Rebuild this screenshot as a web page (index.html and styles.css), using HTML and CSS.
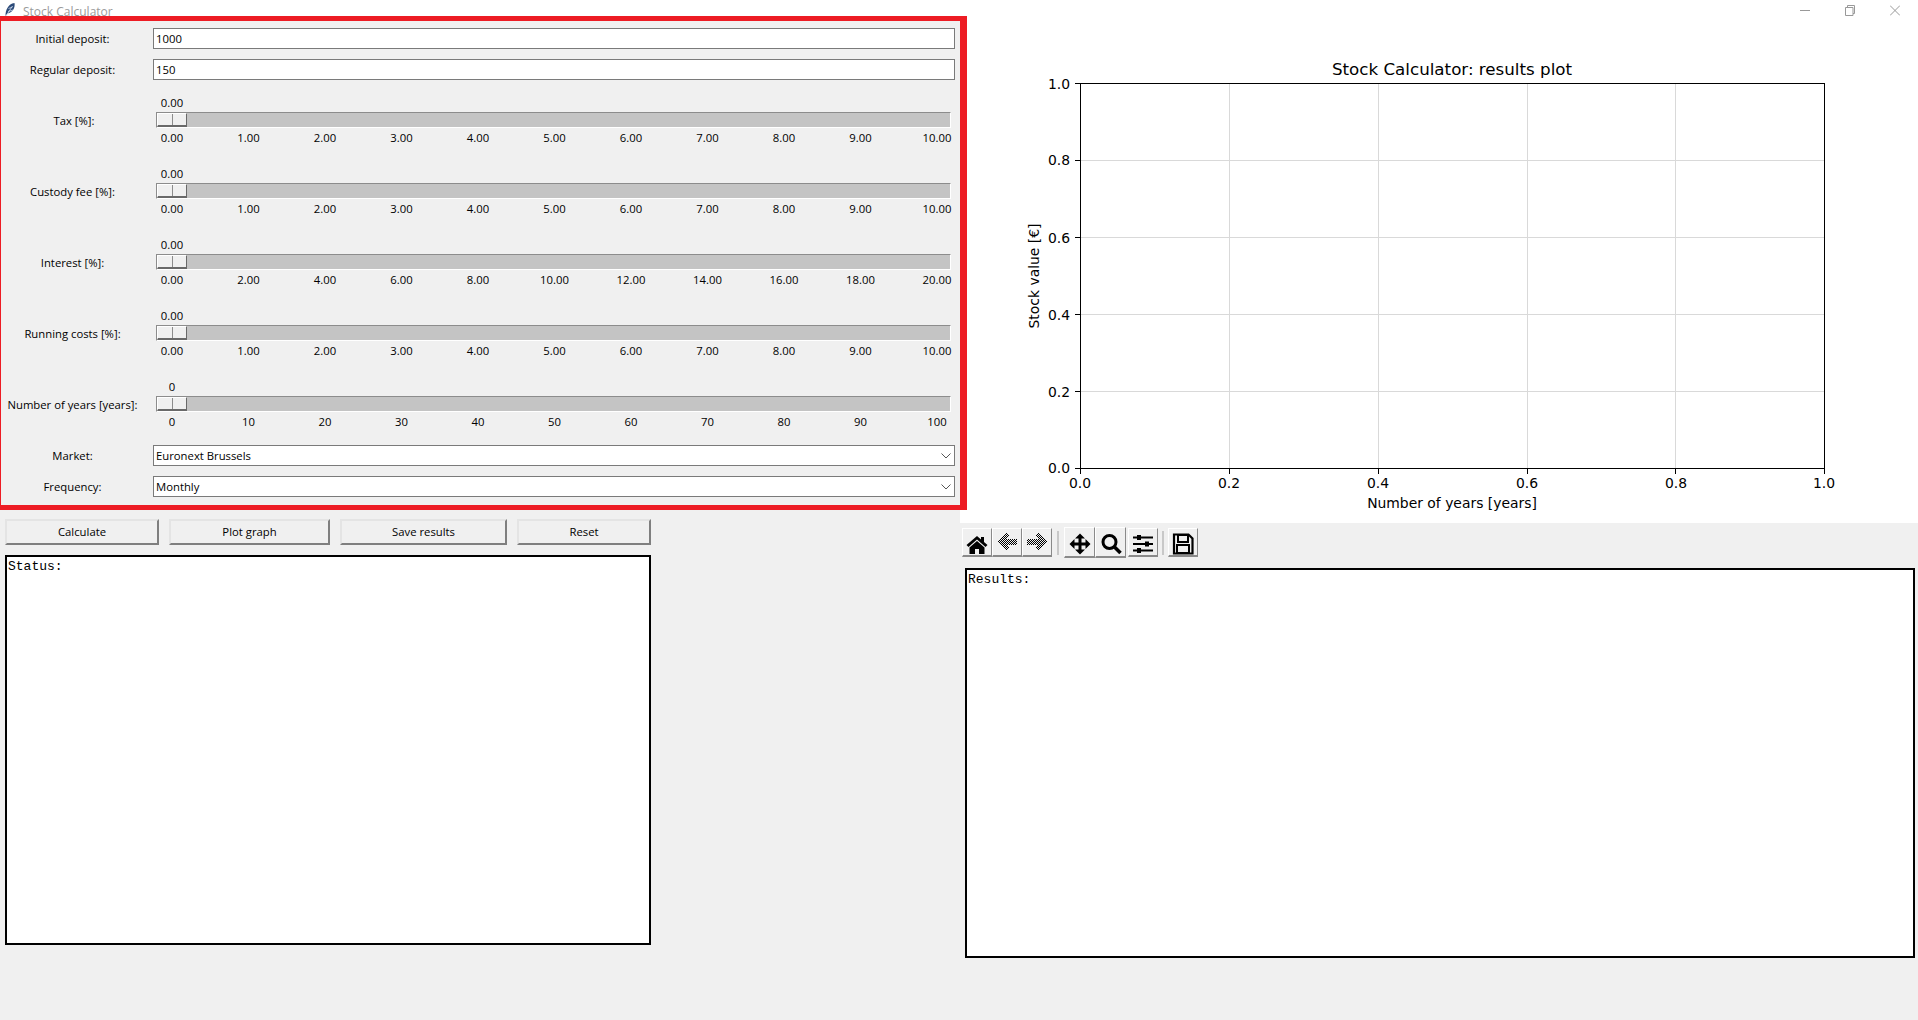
FILE: index.html
```html
<!DOCTYPE html>
<html lang="en">
<head>
    <meta charset="UTF-8">
    <title>Stock Calculator</title>
    <link rel="stylesheet" href="styles.css">
</head>
<body>
    <div class="titlebar">
        <svg class="feather" width="11" height="13" viewBox="0 0 11 13">
            <path d="M.5 13C.5 7 3 1 9.500 0 10.500 5 7 10 2.500 10.500Z" fill="#2b4a78"/>
            <path d="M1 13L7.500 3M3 8.500L8 7M3.500 5.500L7.500 4" stroke="#cfdcef" stroke-width=".8" fill="none"/>
        </svg>
        <span class="title">Stock Calculator</span>
        <div class="window-controls">
            <svg width="10" height="11" viewBox="0 0 10 11"><path d="M0 5.500H10" stroke="#999" fill="none"/></svg>
            <svg width="10" height="11" viewBox="0 0 10 11"><path d="M.5 2.500h7.500v8h-7.500zM2.500 2.500v-2h7v8h-1.500" stroke="#999" fill="none"/></svg>
            <svg width="10" height="11" viewBox="0 0 10 11"><path d="M0 .5L10 10.500M10 .5L0 10.500" stroke="#999" fill="none"/></svg>
        </div>
    </div>

    <div class="main">
        <div class="left">
            <div class="form">
                <label class="field-label">Initial deposit:</label>
                <input class="entry" type="text" value="1000">

                <label class="field-label">Regular deposit:</label>
                <input class="entry" type="text" value="150">

                <label class="field-label label-tax">Tax [%]:</label>
                <div class="scale">
                    <div class="scale-value">0.00</div>
                    <div class="trough"><div class="thumb"></div></div>
                    <div class="ticks">
                        <span>0.00</span><span>1.00</span><span>2.00</span><span>3.00</span><span>4.00</span><span>5.00</span><span>6.00</span><span>7.00</span><span>8.00</span><span>9.00</span><span>10.00</span>
                    </div>
                </div>

                <label class="field-label">Custody fee [%]:</label>
                <div class="scale">
                    <div class="scale-value">0.00</div>
                    <div class="trough"><div class="thumb"></div></div>
                    <div class="ticks">
                        <span>0.00</span><span>1.00</span><span>2.00</span><span>3.00</span><span>4.00</span><span>5.00</span><span>6.00</span><span>7.00</span><span>8.00</span><span>9.00</span><span>10.00</span>
                    </div>
                </div>

                <label class="field-label">Interest [%]:</label>
                <div class="scale">
                    <div class="scale-value">0.00</div>
                    <div class="trough"><div class="thumb"></div></div>
                    <div class="ticks">
                        <span>0.00</span><span>2.00</span><span>4.00</span><span>6.00</span><span>8.00</span><span>10.00</span><span>12.00</span><span>14.00</span><span>16.00</span><span>18.00</span><span>20.00</span>
                    </div>
                </div>

                <label class="field-label">Running costs [%]:</label>
                <div class="scale">
                    <div class="scale-value">0.00</div>
                    <div class="trough"><div class="thumb"></div></div>
                    <div class="ticks">
                        <span>0.00</span><span>1.00</span><span>2.00</span><span>3.00</span><span>4.00</span><span>5.00</span><span>6.00</span><span>7.00</span><span>8.00</span><span>9.00</span><span>10.00</span>
                    </div>
                </div>

                <label class="field-label">Number of years [years]:</label>
                <div class="scale">
                    <div class="scale-value">0</div>
                    <div class="trough"><div class="thumb"></div></div>
                    <div class="ticks">
                        <span>0</span><span>10</span><span>20</span><span>30</span><span>40</span><span>50</span><span>60</span><span>70</span><span>80</span><span>90</span><span>100</span>
                    </div>
                </div>

                <label class="field-label">Market:</label>
                <div class="combo">
                    <span>Euronext Brussels</span>
                    <svg width="10" height="6" viewBox="0 0 10 6"><path d="M.5 .5L5 5L9.500 .5" stroke="#555" fill="none"/></svg>
                </div>

                <label class="field-label">Frequency:</label>
                <div class="combo">
                    <span>Monthly</span>
                    <svg width="10" height="6" viewBox="0 0 10 6"><path d="M.5 .5L5 5L9.500 .5" stroke="#555" fill="none"/></svg>
                </div>

                <div class="highlight"></div>
            </div>

            <div class="buttons">
                <button class="btn btn-calculate">Calculate</button>
                <button class="btn btn-plot">Plot graph</button>
                <button class="btn btn-save">Save results</button>
                <button class="btn btn-reset">Reset</button>
            </div>

            <div class="textbox status">Status:</div>
        </div>

        <div class="right">
            <!-- viewBox uses window coordinates, the plot starts at 960,16 -->
            <svg class="plot" width="958" height="507" viewBox="960 16 958 507">
                <g class="grid-lines">
                    <path d="M1229.500 83V468M1378.500 83V468M1527.500 83V468M1675.500 83V468"/>
                    <path d="M1080 160.500H1824M1080 237.500H1824M1080 314.500H1824M1080 391.500H1824"/>
                </g>
                <rect class="spines" x="1080.500" y="83.500" width="744" height="385"/>
                <path class="tick-marks" d="M1080.500 469v5M1229.500 469v5M1378.500 469v5M1527.500 469v5M1675.500 469v5M1824.500 469v5"/>
                <path class="tick-marks" d="M1080 83.500h-5M1080 160.500h-5M1080 237.500h-5M1080 314.500h-5M1080 391.500h-5M1080 468.500h-5"/>

                <g class="tick-labels x-labels">
                    <text x="1080" y="488">0.0</text>
                    <text x="1229" y="488">0.2</text>
                    <text x="1378" y="488">0.4</text>
                    <text x="1527" y="488">0.6</text>
                    <text x="1676" y="488">0.8</text>
                    <text x="1824" y="488">1.0</text>
                </g>
                <g class="tick-labels y-labels">
                    <text x="1070" y="88.500">1.0</text>
                    <text x="1070" y="165">0.8</text>
                    <text x="1070" y="242.500">0.6</text>
                    <text x="1070" y="319.500">0.4</text>
                    <text x="1070" y="396.500">0.2</text>
                    <text x="1070" y="473">0.0</text>
                </g>
                <text class="plot-title" x="1452" y="75">Stock Calculator: results plot</text>
                <text class="axis-label" x="1452" y="508">Number of years [years]</text>
                <text class="axis-label" transform="translate(1039 276) rotate(-90)">Stock value [€]</text>
            </svg>

            <div class="toolbar">
                <svg class="defs" width="0" height="0">
                    <defs>
                        <pattern id="dither" width="2" height="2" patternUnits="userSpaceOnUse">
                            <rect width="1" height="1" fill="#000"/>
                            <rect x="1" y="1" width="1" height="1" fill="#000"/>
                        </pattern>
                    </defs>
                </svg>
                <div class="tool tool-home">
                    <svg width="24" height="24" viewBox="0 0 24 24">
                        <path d="M12 3L1.500 12l2 2L12 6.500 20.500 14l2-2L19 9V4h-3v2.500z"/>
                        <path d="M4.500 14.500L12 8l7.500 6.500V21H14v-5h-4v5H4.500z"/>
                    </svg>
                </div>
                <div class="tool tool-arrow">
                    <svg width="24" height="24" viewBox="0 0 24 24" shape-rendering="crispEdges">
                        <path fill="url(#dither)" d="M2 12l9-9 3 3-3 3h11v6H11l3 3-3 3z"/>
                    </svg>
                </div>
                <div class="tool tool-arrow">
                    <svg width="24" height="24" viewBox="0 0 24 24" shape-rendering="crispEdges">
                        <path fill="url(#dither)" d="M22 12l-9-9-3 3 3 3H2v6h11l-3 3 3 3z"/>
                    </svg>
                </div>
                <div class="tool-sep tool-sep-first"></div>
                <div class="tool tool-raised">
                    <svg width="24" height="24" viewBox="0 0 24 24">
                        <path d="M12 1.500l5 5h-3.500v4H17.500V7l5 5-5 5v-3.500h-4v4H17l-5 5-5-5h3.500v-4h-4V17l-5-5 5-5v3.500h4v-4H7z"/>
                    </svg>
                </div>
                <div class="tool tool-raised">
                    <svg width="24" height="24" viewBox="0 0 24 24">
                        <circle cx="10.500" cy="10" r="6.500" fill="none" stroke="#000" stroke-width="3"/>
                        <path d="M15 14.500l6.500 6.500" stroke="#000" stroke-width="3.500" fill="none"/>
                    </svg>
                </div>
                <div class="tool tool-config">
                    <svg width="24" height="24" viewBox="0 0 24 24">
                        <path d="M2 5.500h20M2 12h20M2 18.500h20" stroke="#000" stroke-width="2" fill="none"/>
                        <path d="M6 3h4v5H6zM14 9.500h4v5h-4zM6 16h4v5H6z"/>
                    </svg>
                </div>
                <div class="tool-sep"></div>
                <div class="tool">
                    <svg width="24" height="24" viewBox="0 0 24 24">
                        <path d="M3 2.500h14.500l4 4V21.500H3z" fill="none" stroke="#000" stroke-width="2.200"/>
                        <path d="M7 3h10v7H7zM6 13h12v8H6z" fill="none" stroke="#000" stroke-width="2"/>
                    </svg>
                </div>
            </div>

            <div class="textbox results">Results:</div>
        </div>
    </div>
</body>
</html>
```

FILE: styles.css
```css
* {
    box-sizing: border-box;
}

body {
    margin: 0;
    height: 1020px;
    overflow: hidden;
    background-color: #f0f0f0;
    color: #000;
    font-family: 'Open Sans', sans-serif;
    font-size: 11.3px;
}

.titlebar {
    display: flex;
    height: 16px;
    background-color: #fff;
}

.feather {
    margin: 3px 0 0 5px;
}

.title {
    margin: 4px 0 0 7px;
    color: #9b9b9b;
    font-size: 12px;
    line-height: 16px;
}

.window-controls {
    display: flex;
    gap: 35px;
    margin: 5px 18px 0 auto;
}

.main {
    display: grid;
    grid-template-columns: 960px 958px;
}

.form {
    position: relative;
    display: grid;
    grid-template-columns: 145px 802px;
    column-gap: 8px;
    row-gap: 10px;
    align-items: center;
    padding: 12px 5px 13px 0;
}

.highlight {
    position: absolute;
    top: 0;
    left: 0;
    width: 967px;
    height: 100%;
    border: solid #ed1c24;
    border-width: 5px 7px 5px 1px;
}

.field-label {
    text-align: center;
}

.label-tax {
    padding-left: 3px;
}

.entry {
    width: 100%;
    height: 21px;
    padding: 0 2px;
    border: 1px solid #7a7a7a;
    border-radius: 0;
    outline: none;
    background-color: #fff;
    font: inherit;
}

.combo {
    display: flex;
    align-items: center;
    justify-content: space-between;
    height: 21px;
    padding: 0 3px 0 2px;
    border: 1px solid #7a7a7a;
    background-color: #fff;
}

.scale {
    margin: 2px 0 3px;
}

.scale-value {
    width: 30px;
    height: 20px;
    margin-left: 4px;
    line-height: 22px;
    text-align: center;
}

.trough {
    height: 16px;
    margin: 0 4px 0 3px;
    border: solid #8c8c8c;
    border-width: 1px 0 0 1px;
    border-right: 1px solid #fff;
    border-bottom: 1px solid #fff;
    background-color: #c4c4c4;
}

.thumb {
    width: 30px;
    height: 100%;
    border-top: 1px solid #fff;
    border-left: 1px solid #fff;
    border-right: 1px solid #696969;
    border-bottom: 2px solid #696969;
    background-color: #f0f0f0;
}

.thumb::after {
    content: "";
    display: block;
    width: 14px;
    height: 100%;
    border-right: 1px solid #8c8c8c;
}

.ticks {
    display: flex;
    justify-content: space-between;
    margin: 0 3px 0 4px;
    line-height: 20px;
}

.ticks span {
    width: 30px;
    text-align: center;
    white-space: nowrap;
}

.buttons {
    display: flex;
    gap: 10px;
    margin: 9px 0 0 5px;
}

.btn {
    height: 26px;
    padding: 0 0 2px;
    border: solid #e4e4e4;
    border-width: 2px 0 0 2px;
    border-right: 2px solid #7f7f7f;
    border-bottom: 2px solid #7f7f7f;
    background-color: #f0f0f0;
    font: inherit;
}

.btn-calculate {
    width: 154px;
}

.btn-plot {
    width: 161px;
}

.btn-save {
    width: 167px;
}

.btn-reset {
    width: 134px;
}

.textbox {
    height: 390px;
    padding: 2px 1px;
    border: 2px solid #000;
    background-color: #fff;
    font-family: 'Liberation Mono', monospace;
    font-size: 13px;
    line-height: 15px;
}

.status {
    width: 646px;
    margin: 10px 0 0 5px;
}

.results {
    width: 950px;
    margin: 6px 0 0 5px;
}

.plot {
    display: block;
    background-color: #fff;
    font-family: 'DejaVu Sans', sans-serif;
}

.grid-lines {
    stroke: #d9d9d9;
    stroke-width: 1;
    fill: none;
}

.spines {
    fill: none;
    stroke: #000;
    stroke-width: 1;
}

.tick-marks {
    fill: none;
    stroke: #000;
    stroke-width: 1;
}

.tick-labels text {
    font-size: 13.9px;
}

.x-labels text {
    text-anchor: middle;
}

.y-labels text {
    text-anchor: end;
}

.plot-title {
    font-size: 16.7px;
    text-anchor: middle;
}

.axis-label {
    font-size: 13.9px;
    text-anchor: middle;
}

.toolbar {
    display: flex;
    align-items: center;
    height: 39px;
    padding-left: 2px;
}

.defs {
    position: absolute;
}

.tool {
    display: flex;
    align-items: center;
    justify-content: center;
    width: 30px;
    height: 29px;
    border: solid #fff;
    border-width: 1px 0 0 1px;
    border-right: 1px solid #8a8a8a;
    border-bottom: 2px solid #8a8a8a;
    background-color: #f0f0f0;
}

.tool svg {
    margin-top: 4px;
}

.tool-home svg {
    margin-top: 6px;
}

.tool-arrow svg {
    margin-top: 0;
}

.tool-raised {
    width: 31px;
    height: 31px;
}

.tool-config {
    margin-left: 2px;
}

.tool-sep {
    width: 2px;
    height: 24px;
    margin: 0 4px;
    background-color: #c8c8c8;
}

.tool-sep-first {
    margin: 0 5px;
}
```
